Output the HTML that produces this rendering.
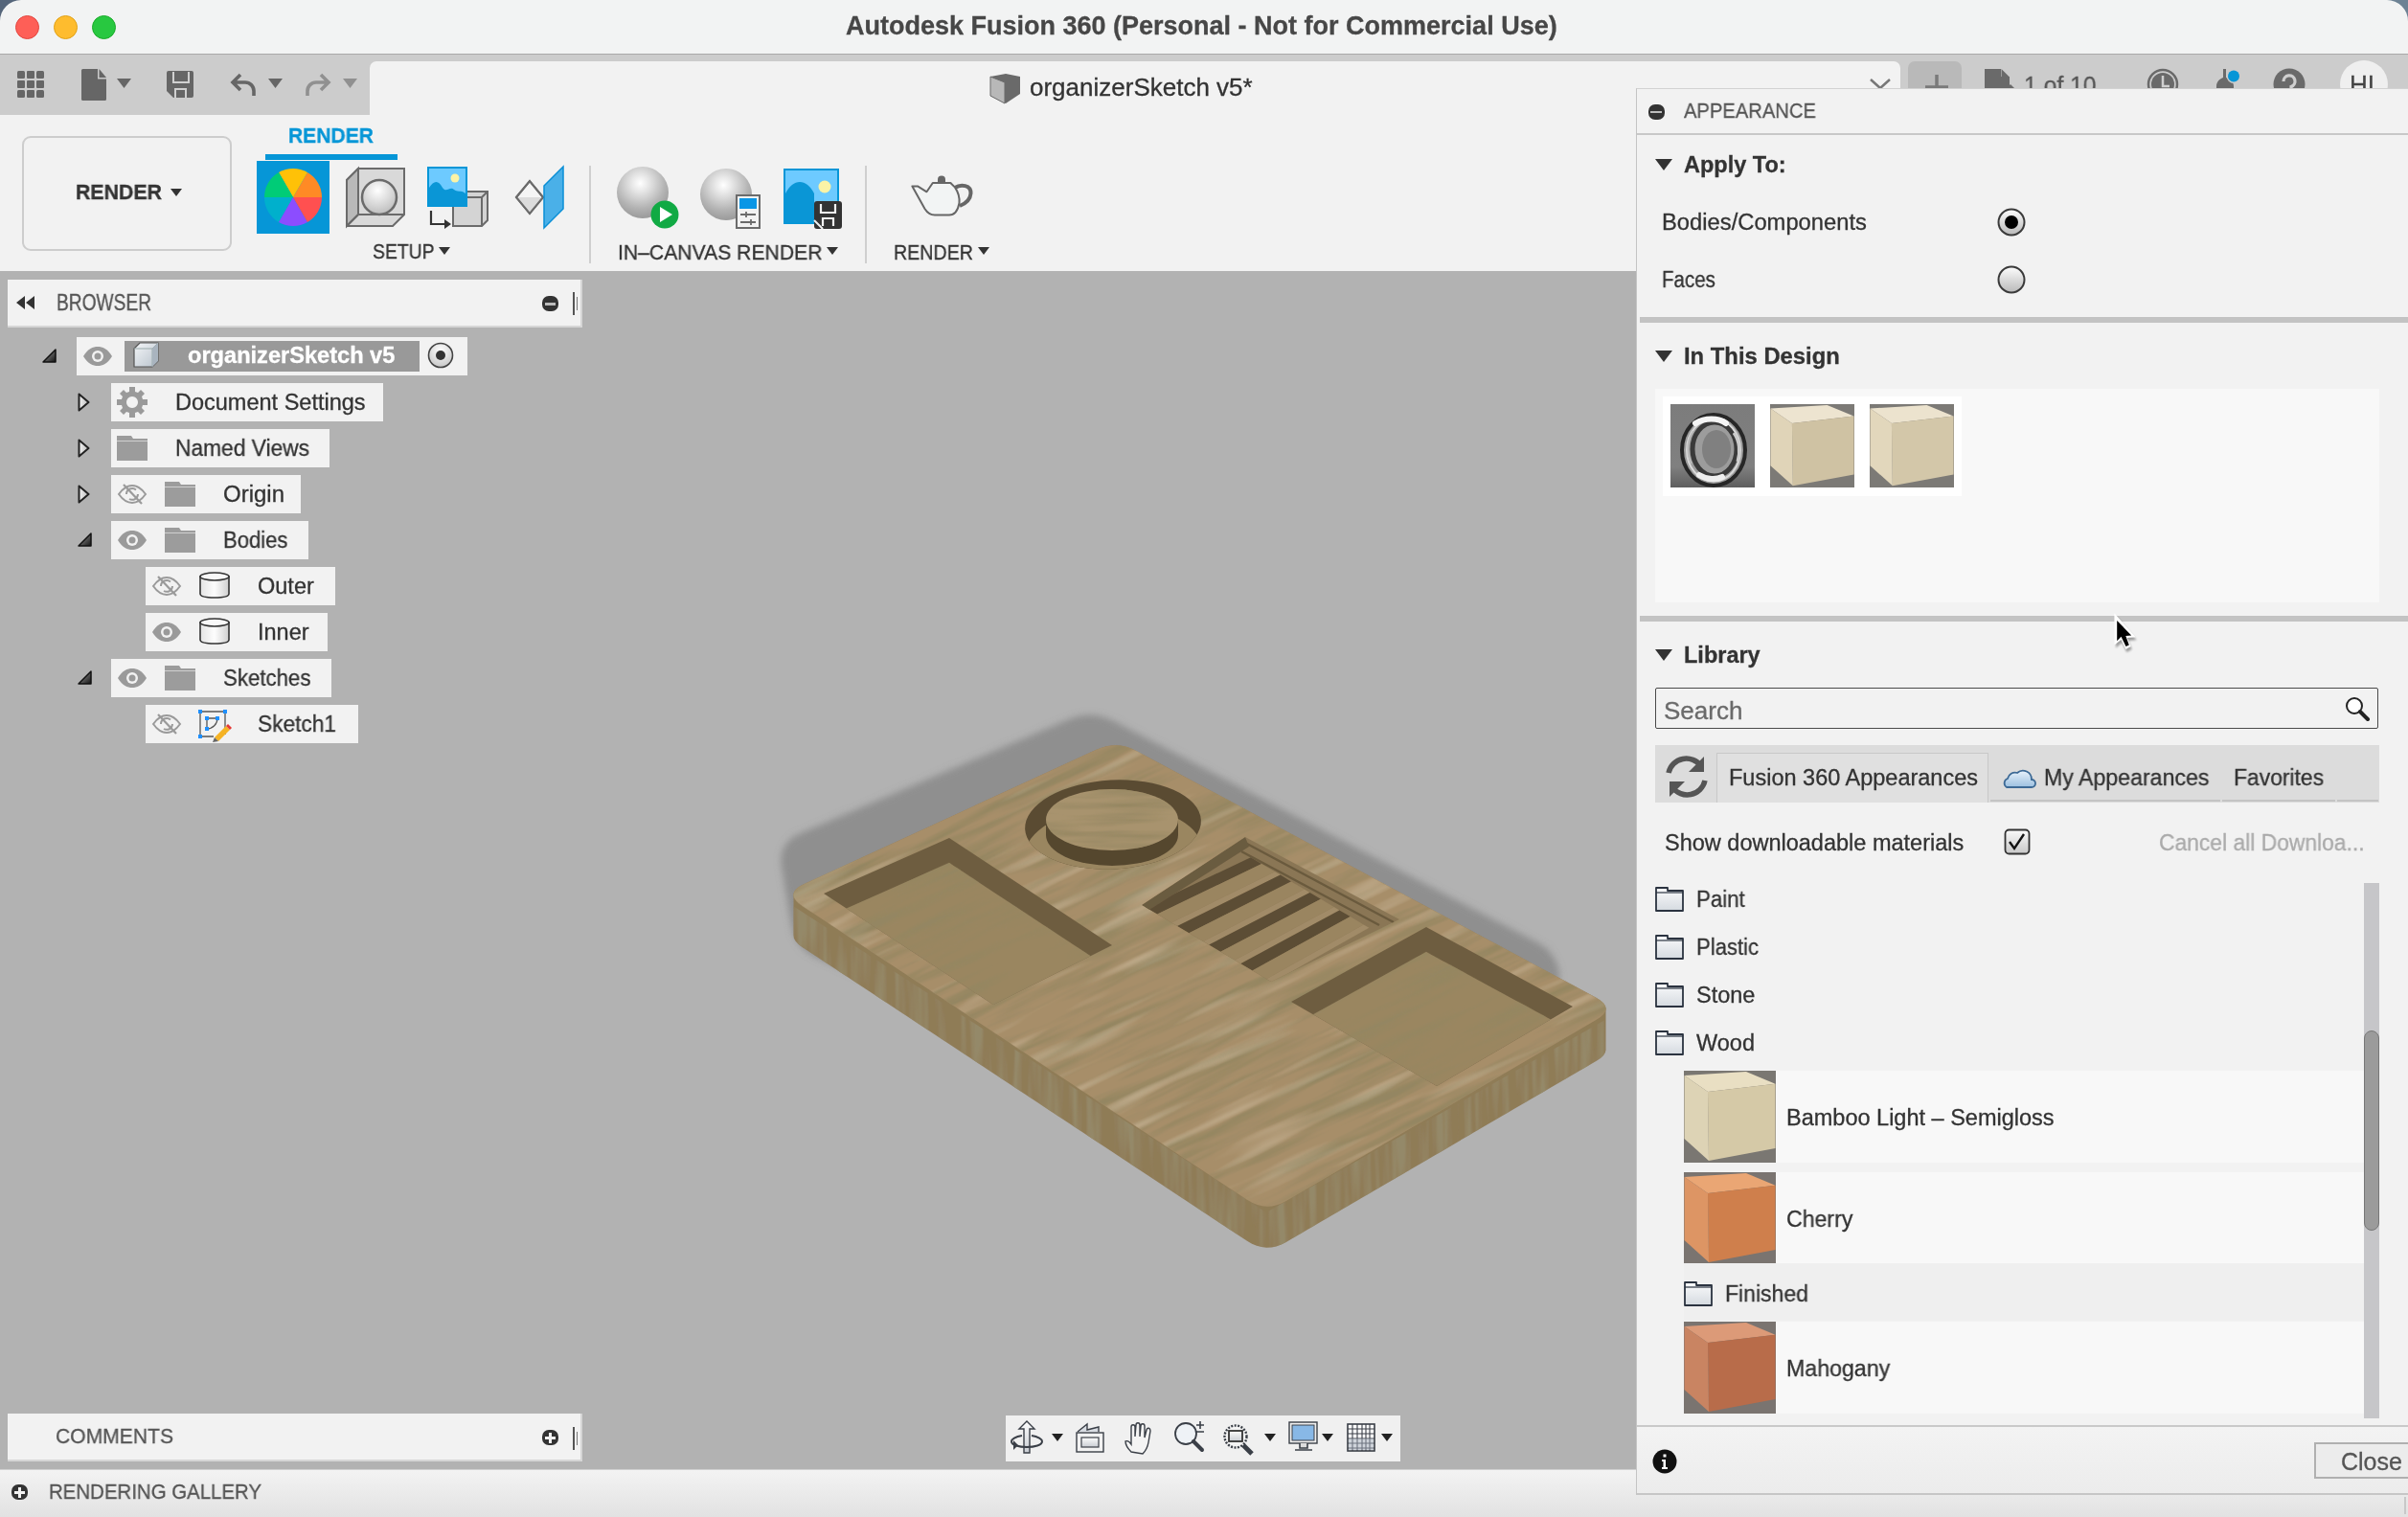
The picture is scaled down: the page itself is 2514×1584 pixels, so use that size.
<!DOCTYPE html>
<html><head><meta charset="utf-8">
<style>
*{margin:0;padding:0;box-sizing:border-box}
html,body{width:2514px;height:1584px;overflow:hidden;background:#f2f2f2;font-family:"Liberation Sans",sans-serif;color:#333}
.a{position:absolute}
.t{position:absolute;white-space:nowrap;line-height:1;will-change:transform;-webkit-text-stroke:0.3px currentColor}
svg{position:absolute;overflow:visible}
</style></head><body>
<!-- title bar -->
<div class="a" style="left:0;top:0;width:2514px;height:57px;background:#f2f3f3;border-bottom:1px solid #a9a9a9"></div>
<div class="a" style="left:16px;top:16px;width:25px;height:25px;border-radius:50%;background:#fe5f57;border:1px solid #e2463f"></div>
<div class="a" style="left:56px;top:16px;width:25px;height:25px;border-radius:50%;background:#febc2e;border:1px solid #e1a116"></div>
<div class="a" style="left:96px;top:16px;width:25px;height:25px;border-radius:50%;background:#28c840;border:1px solid #1aab29"></div>
<div class="t" style="left:883px;top:13.5px;font-size:27px;font-weight:bold;color:#474747">Autodesk Fusion 360 (Personal - Not for Commercial Use)</div>

<!-- quick access toolbar -->
<div class="a" style="left:0;top:57px;width:2514px;height:63px;background:#cccccc"></div>
<div class="a" style="left:386px;top:64px;width:1598px;height:56px;background:#f2f2f2;border-radius:7px 7px 0 0"></div>
<svg style="left:0;top:57px" width="400" height="63">
 <g fill="#666">
  <rect x="18" y="17" width="8" height="8" rx="1.5"/><rect x="28" y="17" width="8" height="8" rx="1"/><rect x="38" y="17" width="8" height="8" rx="1.5"/>
  <rect x="18" y="27" width="8" height="8" rx="1"/><rect x="28" y="27" width="8" height="8" rx="1"/><rect x="38" y="27" width="8" height="8" rx="1"/>
  <rect x="18" y="37" width="8" height="8" rx="1.5"/><rect x="28" y="37" width="8" height="8" rx="1"/><rect x="38" y="37" width="8" height="8" rx="1.5"/>
  <path d="M86.5 15h15.5v10.5h9v21a1.5 1.5 0 0 1-1.5 1.5h-23a1.5 1.5 0 0 1-1.5-1.5v-30a1.5 1.5 0 0 1 1.5-1.5z"/><path d="M103.5 15l7.5 9h-7.5z"/>
  <path d="M122 25h15l-7.5 10z"/>
  <path d="M176 17h24a2 2 0 0 1 2 2v24a2 2 0 0 1-2 2h-19l-7-7v-19a2 2 0 0 1 2-2z"/><path d="M181 18v11h16v-11" fill="none" stroke="#d0d0d0" stroke-width="2"/><path d="M183 45v-9h11v9" fill="none" stroke="#d0d0d0" stroke-width="2"/>
  <path d="M280 25h15l-7.5 10z"/>
 </g>
 <path d="M251 21l-8 8 8 8 M243 29h13a9 9 0 0 1 9 9v5" stroke="#666" stroke-width="3.6" fill="none"/>
 <path d="M335 21l8 8-8 8 M343 29h-13a9 9 0 0 0-9 9v5" stroke="#909090" stroke-width="3.6" fill="none"/>
 <path d="M358 25h15l-7.5 10z" fill="#909090"/>
</svg>
<!-- doc tab content -->
<svg style="left:1030px;top:74px" width="40" height="36">
 <path d="M4 6l16-3 15 3v18l-15 10-16-8z" fill="#6a6a6a"/>
 <path d="M4 6l15 6v22l-15-8z" fill="#b8b8b8" stroke="#6a6a6a" stroke-width="1"/>
</svg>
<div class="t" style="left:1075px;top:78px;font-size:26px;color:#333">organizerSketch v5*</div>
<svg style="left:1950px;top:80px" width="26" height="14"><path d="M3 3l10 9 10-9" stroke="#777" stroke-width="2.5" fill="none"/></svg>
<div class="a" style="left:1992px;top:64px;width:56px;height:40px;background:#b9b9b9;border-radius:7px"></div>
<svg style="left:2005px;top:78px" width="34" height="20"><path d="M17 0v20 M5 13h24" stroke="#7a7a7a" stroke-width="3.5"/></svg>
<svg style="left:2070px;top:70px" width="40" height="30"><path d="M2 2h17v28h-17z" fill="#6a6a6a"/><path d="M19.5 2l8 8h-8z" fill="#6a6a6a"/><path d="M19 10h9v10l-9 9z" fill="#6a6a6a"/><path d="M19 30l8-8 5 5-8 8z" fill="#cfcfcf"/><path d="M24 23l5-5 4 4-5 5z" fill="#6a6a6a"/></svg>
<div class="t" style="left:2113px;top:76px;font-size:26px;color:#555;transform:scaleX(0.95);transform-origin:0 0">1 of 10</div>
<svg style="left:2240px;top:70px" width="40" height="30"><circle cx="18" cy="18" r="15" stroke="#6a6a6a" stroke-width="2.5" fill="none"/><circle cx="18" cy="18" r="12" fill="#6a6a6a"/><path d="M18 9v11h7" stroke="#cfcfcf" stroke-width="2.5" fill="none"/></svg>
<svg style="left:2308px;top:70px" width="40" height="30"><path d="M6 30v-10c0-5 4-8 7-9v-9h3v9c4 1 8 4 8 9v10z" fill="#6a6a6a"/><circle cx="24" cy="9.5" r="7.5" fill="#cccccc"/><circle cx="24" cy="9.5" r="6" fill="#0696d7"/></svg>
<svg style="left:2370px;top:70px" width="40" height="30"><circle cx="20" cy="18" r="16.5" fill="#6a6a6a"/><path d="M14 15a6 6 0 1 1 8 5.5v4" stroke="#cfcfcf" stroke-width="3.2" fill="none"/></svg>
<div class="a" style="left:2443px;top:63px;width:50px;height:50px;background:#efefef;border-radius:50%"></div>
<div class="t" style="left:2453px;top:75px;font-size:26px;color:#444">HI</div>

<!-- ribbon -->
<div class="a" style="left:0;top:120px;width:1708px;height:163px;background:#f2f2f2"></div>
<div class="a" style="left:23px;top:142px;width:219px;height:120px;border:2px solid #cdcdcd;border-radius:9px"></div>
<div class="t" style="left:79.0px;top:190.1px;font-size:22.3px;color:#333;font-weight:bold;transform:scaleX(0.956);transform-origin:0 0">RENDER</div>
<svg style="left:178px;top:197px" width="14" height="10"><path d="M0 0h12l-6 8z" fill="#333"/></svg>
<div class="t" style="left:301.0px;top:131.1px;font-size:22.3px;color:#0696d7;font-weight:bold;transform:scaleX(0.945);transform-origin:0 0">RENDER</div>
<div class="a" style="left:277px;top:161px;width:138px;height:6px;background:#0696d7"></div>
<!-- color wheel -->
<div class="a" style="left:268px;top:168px;width:76px;height:76px;background:#0696d7"></div>
<svg style="left:268px;top:168px" width="76" height="76">
 <g transform="translate(38 38)">
  <path d="M0 0L30 0A30 30 0 0 0 15 -25.98z" fill="#ff8a25"/>
  <path d="M0 0L15 -25.98A30 30 0 0 0 -15 -25.98z" fill="#ffc107"/>
  <path d="M0 0L-15 -25.98A30 30 0 0 0 -30 0z" fill="#00cc77"/>
  <path d="M0 0L-30 0A30 30 0 0 0 -15 25.98z" fill="#00b0cc"/>
  <path d="M0 0L-15 25.98A30 30 0 0 0 15 25.98z" fill="#8c4dff"/>
  <path d="M0 0L15 25.98A30 30 0 0 0 30 0z" fill="#ff5050"/>
 </g>
</svg>
<!-- sphere box -->
<svg style="left:360px;top:174px" width="66" height="64">
 <defs><radialGradient id="sg" cx="0.45" cy="0.3" r="0.7"><stop offset="0" stop-color="#fff"/><stop offset="1" stop-color="#bdbdbd"/></radialGradient></defs>
 <path d="M2 14l12-12h48v48l-12 12h-48z" fill="#d9d9d9" stroke="#6b6b6b" stroke-width="2"/>
 <path d="M2 14l12-12v48l-12 12z" fill="#b9b9b9" stroke="#6b6b6b" stroke-width="2"/>
 <path d="M2 62l12-12h48" fill="none" stroke="#6b6b6b" stroke-width="2"/>
 <circle cx="36" cy="32" r="18" fill="url(#sg)" stroke="#6b6b6b" stroke-width="2.5"/>
</svg>
<!-- image to cube -->
<svg style="left:444px;top:172px" width="70" height="70">
 <path d="M29 34l6-6h30v30l-6 6h-30z" fill="#d4d4d4" stroke="#6b6b6b" stroke-width="2"/>
 <path d="M59 64v-30l6-6" fill="none" stroke="#6b6b6b" stroke-width="2"/>
 <path d="M29 34h30" stroke="#6b6b6b" stroke-width="2"/>
 <rect x="2" y="2" width="42" height="42" fill="#0696d7"/>
 <rect x="4" y="4" width="38" height="38" fill="#6dcaff"/>
 <path d="M4 42v-18c5-8 10-8 14 0 4 6 8 -2 12 2 3 3 7 0 12 4v12z" fill="#0a96d6"/>
 <circle cx="31" cy="14" r="4.5" fill="#fbf3a6"/>
 <path d="M6 48v14h16" stroke="#333" stroke-width="2.2" fill="none"/>
 <path d="M20 57l7 5-7 5z" fill="#333"/>
</svg>
<!-- diamond plane -->
<svg style="left:536px;top:172px" width="56" height="68">
 <path d="M3 34l14-17 14 17-14 17z" fill="#f5f5f5" stroke="#6b6b6b" stroke-width="2"/>
 <path d="M3 34h28l-14 17z" fill="#dcdcdc"/>
 <path d="M3 34l14-17 14 17-14 17z" fill="none" stroke="#6b6b6b" stroke-width="2"/>
 <path d="M32 22l20-20v44l-20 20z" fill="#4ab0e8" stroke="#0a8fd6" stroke-width="1.5"/>
</svg>
<div class="t" style="left:389.0px;top:252.3px;font-size:21.6px;color:#333;transform:scaleX(0.897);transform-origin:0 0">SETUP</div>
<svg style="left:458px;top:258px" width="14" height="10"><path d="M0 0h12l-6 8z" fill="#333"/></svg>
<div class="a" style="left:615px;top:173px;width:2px;height:102px;background:#cfcfcf"></div>
<!-- in-canvas render -->
<svg style="left:638px;top:170px" width="250" height="72">
 <defs>
  <radialGradient id="ball" cx="0.45" cy="0.32" r="0.68"><stop offset="0" stop-color="#ffffff"/><stop offset="0.25" stop-color="#e6e6e6"/><stop offset="0.7" stop-color="#b4b4b4"/><stop offset="1" stop-color="#9a9a9a"/></radialGradient>
 </defs>
 <circle cx="33" cy="31" r="27" fill="url(#ball)"/>
 <circle cx="56" cy="54" r="14.5" fill="#11aa44"/>
 <path d="M51 46v16l13-8z" fill="#fff"/>
 <circle cx="120" cy="33" r="27" fill="url(#ball)"/>
 <rect x="131" y="34" width="24" height="34" fill="#f2f2f2" stroke="#6b6b6b" stroke-width="2"/>
 <rect x="134" y="37" width="18" height="11" fill="#0a96e6"/>
 <path d="M135 54h16 M135 62h16 M141 51v6 M146 59v6" stroke="#6b6b6b" stroke-width="1.8"/>
 <rect x="180" y="6" width="58" height="58" fill="#0696d7"/>
 <rect x="182" y="8" width="54" height="54" fill="#6dcaff"/>
 <path d="M182 62v-30c8-16 22-16 30 0v30z" fill="#0a96d6"/>
 <circle cx="223" cy="25" r="6.5" fill="#fbf3a6"/>
 <rect x="212" y="40" width="29" height="29" rx="3" fill="#333"/>
 <path d="M212 60l9 9" stroke="#f2f2f2" stroke-width="2"/>
 <path d="M219 43v9h15v-9 M221 66v-8h11v8" stroke="#f2f2f2" stroke-width="2.2" fill="none"/>
</svg>
<div class="t" style="left:645.0px;top:252.7px;font-size:21.6px;color:#333;transform:scaleX(0.979);transform-origin:0 0">IN&#8211;CANVAS RENDER</div>
<svg style="left:863px;top:258px" width="14" height="10"><path d="M0 0h12l-6 8z" fill="#333"/></svg>
<div class="a" style="left:903px;top:173px;width:2px;height:102px;background:#cfcfcf"></div>
<svg style="left:948px;top:182px" width="72" height="48">
 <path d="M49 14C55 10 66 11 65.5 20C65 27 59 31 54 33" fill="none" stroke="#666" stroke-width="4"/>
 <path d="M4.4 12.4H10L19.5 18.3L25.8 9H44.4L49 13.6C52 18 54 24 53.5 30C52 38 48 42.5 43 42.5H28C24 42.5 20 40 17.5 36Z" fill="#f2f4f4" stroke="#666" stroke-width="2" stroke-linejoin="round"/>
 <path d="M31 9V5.5A4 4 0 0 1 39 5.5V9Z" fill="#666"/>
</svg>
<div class="t" style="left:933.0px;top:252.7px;font-size:21.6px;color:#333;transform:scaleX(0.910);transform-origin:0 0">RENDER</div>
<svg style="left:1021px;top:258px" width="14" height="10"><path d="M0 0h12l-6 8z" fill="#333"/></svg>

<!-- viewport -->
<div class="a" style="left:0;top:283px;width:1708px;height:1251px;background:#b2b2b2"></div>
<!-- TRAY -->
<svg style="left:0;top:0" width="1708" height="1534">
<defs>
<filter id="soft" x="-2%" y="-2%" width="104%" height="104%"><feGaussianBlur stdDeviation="0.7"/></filter>
<filter id="blur3" x="-10%" y="-10%" width="120%" height="120%"><feGaussianBlur stdDeviation="3.5"/></filter>
<filter id="grainTop" x="-5%" y="-5%" width="110%" height="110%"><feTurbulence type="fractalNoise" baseFrequency="0.007 0.085" numOctaves="3" seed="4"/><feColorMatrix type="matrix" values="0 0 0 0 0.30  0 0 0 0 0.24  0 0 0 0 0.12  3.0 0 0 0 -1.25"/><feComposite in2="SourceGraphic" operator="in"/></filter>
<filter id="grainHi" x="-5%" y="-5%" width="110%" height="110%"><feTurbulence type="fractalNoise" baseFrequency="0.006 0.07" numOctaves="2" seed="11"/><feColorMatrix type="matrix" values="0 0 0 0 0.76  0 0 0 0 0.66  0 0 0 0 0.50  1.4 0 0 0 -0.78"/><feComposite in2="SourceGraphic" operator="in"/></filter>
<filter id="grainSide" x="-5%" y="-5%" width="110%" height="110%"><feTurbulence type="fractalNoise" baseFrequency="0.12 0.008" numOctaves="2" seed="7"/><feColorMatrix type="matrix" values="0 0 0 0 0.30  0 0 0 0 0.25  0 0 0 0 0.14  3.2 0 0 0 -1.3"/><feComposite in2="SourceGraphic" operator="in"/></filter>
</defs>
<defs><clipPath id="pk0"><polygon points="860.0,933.0 991.0,875.0 1161.0,987.0 1037.0,1049.0"/></clipPath><clipPath id="pk1"><polygon points="1348.0,1046.0 1489.0,968.0 1642.0,1051.0 1500.0,1134.0"/></clipPath><clipPath id="pks"><polygon points="1192.0,945.0 1300.0,874.0 1461.0,960.0 1327.0,1025.0"/></clipPath><clipPath id="pkc"><ellipse cx="1162" cy="861" rx="92" ry="46.5" transform="rotate(-3 1162 861)"/></clipPath></defs>
<path d="M816.2,905.7 Q812.0,880.0 835.9,869.9 L1116.1,751.1 Q1140.0,741.0 1163.0,753.0 L1605.0,984.1 Q1622.0,993.0 1627.0,1011.5 L1627.0,1011.5 Q1632.0,1030.0 1614.9,1038.7 L1323.1,1188.1 Q1300.0,1200.0 1276.3,1189.4 L853.7,1000.6 Q830.0,990.0 825.8,964.3 Z" fill="#8f8f8f" filter="url(#blur3)"/>
<g filter="url(#soft)">
<polygon points="828.5,933.8 829.3,930.9 831.5,928.2 835.0,925.5 839.8,923.0 1144.2,783.0 1149.6,780.9 1155.1,779.3 1160.5,778.5 1165.8,778.3 1171.2,778.8 1176.5,780.0 1181.8,781.9 1187.1,784.4 1665.9,1041.6 1670.5,1044.5 1673.8,1047.4 1675.8,1050.3 1676.5,1053.2 1676.5,1096.2 1675.9,1099.1 1674.0,1102.1 1670.8,1105.1 1666.3,1108.1 1342.7,1296.9 1337.6,1299.5 1332.4,1301.4 1327.3,1302.4 1322.2,1302.7 1317.1,1302.1 1312.0,1300.8 1307.0,1298.7 1302.0,1295.8 838.0,989.2 833.7,986.0 830.6,982.8 828.9,979.8 828.5,976.8" fill="#8f7b57"/>
<clipPath id="sideclip"><polygon points="828.5,933.8 829.3,930.9 831.5,928.2 835.0,925.5 839.8,923.0 1144.2,783.0 1149.6,780.9 1155.1,779.3 1160.5,778.5 1165.8,778.3 1171.2,778.8 1176.5,780.0 1181.8,781.9 1187.1,784.4 1665.9,1041.6 1670.5,1044.5 1673.8,1047.4 1675.8,1050.3 1676.5,1053.2 1676.5,1096.2 1675.9,1099.1 1674.0,1102.1 1670.8,1105.1 1666.3,1108.1 1342.7,1296.9 1337.6,1299.5 1332.4,1301.4 1327.3,1302.4 1322.2,1302.7 1317.1,1302.1 1312.0,1300.8 1307.0,1298.7 1302.0,1295.8 838.0,989.2 833.7,986.0 830.6,982.8 828.9,979.8 828.5,976.8"/></clipPath>
<g clip-path="url(#sideclip)"><path d="M808.0,933.0 1322.0,1266.0 1697.0,1053.0 1697.0,1103.0 1322.0,1316.0 808.0,983.0Z" fill="#000" filter="url(#grainSide)"/></g>
<path d="M838.0,946.2 Q818.0,933.0 839.8,923.0 L1144.2,783.0 Q1166.0,773.0 1187.1,784.4 L1665.9,1041.6 Q1687.0,1053.0 1666.3,1065.1 L1342.7,1253.9 Q1322.0,1266.0 1302.0,1252.8 Z" fill="#a78e69"/>
<g transform="rotate(-25 1250 1020)"><path d="M907.8,779.0 Q895.2,758.6 919.2,758.7 L1254.3,760.5 Q1278.3,760.6 1292.6,779.9 L1617.8,1215.4 Q1632.1,1234.6 1608.2,1236.8 L1235.2,1271.2 Q1211.3,1273.4 1198.7,1252.9 Z" fill="#000" filter="url(#grainTop)"/><path d="M907.8,779.0 Q895.2,758.6 919.2,758.7 L1254.3,760.5 Q1278.3,760.6 1292.6,779.9 L1617.8,1215.4 Q1632.1,1234.6 1608.2,1236.8 L1235.2,1271.2 Q1211.3,1273.4 1198.7,1252.9 Z" fill="#000" filter="url(#grainHi)"/></g>
<polygon points="860.0,933.0 991.0,875.0 1161.0,987.0 1037.0,1049.0" fill="#6e5d40"/>
<polygon points="860.0,959.0 991.0,901.0 1161.0,1013.0 1037.0,1075.0" fill="#9a8661" clip-path="url(#pk0)"/>
<g clip-path="url(#pk0)"><g transform="rotate(-25 1250 1020)"><path d="M922.3,799.9 1065.6,802.7 1172.3,976.0 1033.7,979.8Z" fill="#000" filter="url(#grainTop)"/></g></g>
<polygon points="1348.0,1046.0 1489.0,968.0 1642.0,1051.0 1500.0,1134.0" fill="#6e5d40"/>
<polygon points="1348.0,1072.0 1489.0,994.0 1642.0,1077.0 1500.0,1160.0" fill="#9a8661" clip-path="url(#pk1)"/>
<g clip-path="url(#pk1)"><g transform="rotate(-25 1250 1020)"><path d="M1316.8,1108.5 1477.6,1097.4 1581.2,1237.3 1417.4,1252.5Z" fill="#000" filter="url(#grainTop)"/></g></g>
<polygon points="1192.0,945.0 1300.0,874.0 1461.0,960.0 1327.0,1025.0" fill="#8a7655"/>
<g clip-path="url(#pks)">
<polygon points="1196.0,947.4 1305.8,895.2 1317.1,902.0 1208.2,954.6" fill="#5c4d35"/>
<polygon points="1208.2,954.6 1317.1,902.0 1331.0,910.2 1223.0,963.4" fill="#9a8560"/>
<polygon points="1223.0,963.4 1331.0,910.2 1336.7,913.6 1229.1,967.0" fill="#a18b67"/>
<polygon points="1229.1,967.0 1336.7,913.6 1348.0,920.4 1241.3,974.2" fill="#5c4d35"/>
<polygon points="1241.3,974.2 1348.0,920.4 1361.8,928.6 1256.1,983.0" fill="#9a8560"/>
<polygon points="1256.1,983.0 1361.8,928.6 1367.5,932.0 1262.2,986.6" fill="#a18b67"/>
<polygon points="1262.2,986.6 1367.5,932.0 1378.9,938.8 1274.3,993.8" fill="#5c4d35"/>
<polygon points="1274.3,993.8 1378.9,938.8 1392.7,947.0 1289.2,1002.6" fill="#9a8560"/>
<polygon points="1289.2,1002.6 1392.7,947.0 1398.4,950.4 1295.3,1006.2" fill="#a18b67"/>
<polygon points="1295.3,1006.2 1398.4,950.4 1409.7,957.1 1307.4,1013.4" fill="#5c4d35"/>
<polygon points="1307.4,1013.4 1409.7,957.1 1423.6,965.4 1322.3,1022.2" fill="#9a8560"/>
<polygon points="1322.3,1022.2 1423.6,965.4 1429.3,968.8 1328.3,1025.8" fill="#a18b67"/>
<path d="M1300,880 L1455,963 M1296,889 L1440,966" stroke="#6a5a3e" stroke-width="2.5" fill="none"/>
<polygon points="1192.0,945.0 1300.0,874.0 1304.0,884.0 1200.0,950.0" fill="#6b5b40"/>
</g>
<ellipse cx="1162" cy="861" rx="92" ry="46.5" transform="rotate(-3 1162 861)" fill="#5a4b33"/>
<g clip-path="url(#pkc)"><ellipse cx="1162" cy="889" rx="92" ry="46.5" transform="rotate(-3 1162 889)" fill="#9a8660"/></g>
<path d="M1092,856 L1092,872 A69,32 0 0 0 1230,872 L1230,856 Z" fill="#55472f"/>
<ellipse cx="1161" cy="856" rx="69" ry="32" fill="#a8936e"/>
<g clip-path="url(#pkc)"><g transform="rotate(-25 1250 1020)"><ellipse cx="1238.6" cy="833.8" rx="69" ry="32" transform="rotate(25 1238.6 833.8)" fill="#000" filter="url(#grainTop)"/></g></g>
</g>
</svg>
<!-- /TRAY -->
<svg width="0" height="0" style="position:absolute">
 <defs>
  <symbol id="eye" viewBox="0 0 32 20"><path d="M1 10C6 2 11 0 16 0s10 2 15 10c-5 8-10 10-15 10S6 18 1 10z" fill="#9a9a9a"/><circle cx="16" cy="10" r="6" fill="#f2f2f2"/><circle cx="16" cy="10" r="3.5" fill="#9a9a9a"/></symbol>
  <symbol id="eyeoff" viewBox="0 0 32 22"><path d="M2 11C7 4 11 2 16 2s9 2 14 9c-5 7-9 9-14 9S7 18 2 11z" fill="none" stroke="#9a9a9a" stroke-width="2"/><path d="M10 11a6 6 0 0 1 10-4.5 M22 11a6 6 0 0 1-9 5" fill="none" stroke="#9a9a9a" stroke-width="2"/><path d="M7 1l19 20" stroke="#9a9a9a" stroke-width="2.2"/></symbol>
  <symbol id="fold" viewBox="0 0 32 26"><path d="M0 0h15l2 3h15v23h-32z" fill="#9c9c9c"/><path d="M0 5.5h32" stroke="#cfcfcf" stroke-width="1"/></symbol>
  <symbol id="tri" viewBox="0 0 15 15"><linearGradient id="tg" x1="0" y1="0" x2="1" y2="1"><stop offset="0" stop-color="#aaa"/><stop offset="1" stop-color="#111"/></linearGradient><path d="M14 1v13h-13z" fill="url(#tg)" stroke="#111" stroke-width="1.5" stroke-linejoin="round"/></symbol>
  <symbol id="trio" viewBox="0 0 13 20"><linearGradient id="tog" x1="0" y1="0" x2="1" y2="0"><stop offset="0" stop-color="#f4f4f4"/><stop offset="1" stop-color="#bbb"/></linearGradient><path d="M1.5 1.5l10 8.5-10 8.5z" fill="url(#tog)" stroke="#222" stroke-width="2" stroke-linejoin="round"/></symbol>
  <symbol id="cyl" viewBox="0 0 32 28"><linearGradient id="cg" x1="0" y1="0" x2="1" y2="0"><stop offset="0" stop-color="#e4e4e4"/><stop offset="0.5" stop-color="#fdfdfd"/><stop offset="1" stop-color="#cfcfcf"/></linearGradient><path d="M1 5v18c0 3 7 4 15 4s15-1 15-4v-18z" fill="url(#cg)" stroke="#333" stroke-width="1.6"/><ellipse cx="16" cy="5" rx="15" ry="4" fill="#f8f8f8" stroke="#333" stroke-width="1.6"/></symbol>
  <symbol id="gear" viewBox="0 0 32 32"><path fill="#9a9a9a" fill-rule="evenodd" d="M13 0h6v5l3 1 3-3 4 4-3 3 1 3h5v6h-5l-1 3 3 3-4 4-3-3-3 1v5h-6v-5l-3-1-3 3-4-4 3-3-1-3h-5v-6h5l1-3-3-3 4-4 3 3 3-1z M16 10a6 6 0 1 0 0.01 0z"/></symbol>
 </defs>
</svg>
<!-- browser -->
<div class="a" style="left:8px;top:292px;width:600px;height:50px;background:#f2f2f2;border-right:2px solid #d6d6d6;border-bottom:2px solid #d6d6d6"></div>
<svg style="left:16px;top:308px" width="24" height="16"><path d="M1 8l9-7v14z M11 8l9-7v14z" fill="#333"/></svg>
<div class="t" style="left:58.7px;top:304.8px;font-size:23.0px;color:#555;transform:scaleX(0.833);transform-origin:0 0">BROWSER</div>
<div class="a" style="left:566px;top:309px;width:17px;height:16px;border-radius:7px;background:#333"></div>
<div class="a" style="left:569px;top:316px;width:11px;height:2.5px;background:#bdbdbd"></div>
<div class="a" style="left:598px;top:305px;width:2px;height:24px;background:#555"></div>
<div class="a" style="left:602px;top:310px;width:1px;height:14px;background:#777"></div>

<svg style="left:44px;top:364px" width="16" height="16"><use href="#tri" width="15" height="15"/></svg>
<div class="a" style="left:80px;top:352px;width:408px;height:40px;background:#f2f2f2"></div>
<svg style="left:86px;top:362px" width="32" height="20"><use href="#eye" width="32" height="20"/></svg>
<div class="a" style="left:130px;top:356px;width:308px;height:32px;background:#999"></div>
<svg style="left:138px;top:356px" width="30" height="28">
 <linearGradient id="cubeg" x1="0" y1="0" x2="1" y2="1"><stop offset="0" stop-color="#f4f6f8"/><stop offset="1" stop-color="#b8c2cc"/></linearGradient>
 <path d="M2 8l6-6h19v19l-6 6h-19z" fill="url(#cubeg)" stroke="#555" stroke-width="1.2"/>
 <path d="M2 8h19v19 M21 8l6-6" fill="none" stroke="#9aa" stroke-width="1"/>
 <path d="M21 8l6-6v19l-6 6z" fill="#a9b4bf"/>
</svg>
<div class="t" style="left:196.0px;top:360.0px;font-size:23.6px;color:#fff;font-weight:bold">organizerSketch v5</div>
<svg style="left:446px;top:357px" width="28" height="28">
 <radialGradient id="rg1" cx="0.5" cy="0.3" r="0.7"><stop offset="0" stop-color="#fff"/><stop offset="1" stop-color="#c8c8c8"/></radialGradient>
 <circle cx="14" cy="14" r="12.5" fill="url(#rg1)" stroke="#444" stroke-width="1.6"/>
 <circle cx="14" cy="14" r="5" fill="#333"/>
</svg>

<svg style="left:81px;top:410px" width="14" height="20"><use href="#trio" width="13" height="20"/></svg>
<div class="a" style="left:116px;top:400px;width:284px;height:40px;background:#f2f2f2"></div>
<svg style="left:122px;top:404px" width="32" height="32"><use href="#gear" width="32" height="32"/></svg>
<div class="t" style="left:183.0px;top:408.7px;font-size:23.5px;color:#333">Document Settings</div>

<svg style="left:81px;top:458px" width="14" height="20"><use href="#trio" width="13" height="20"/></svg>
<div class="a" style="left:116px;top:448px;width:228px;height:40px;background:#f2f2f2"></div>
<svg style="left:122px;top:455px" width="32" height="26"><use href="#fold" width="32" height="26"/></svg>
<div class="t" style="left:183.0px;top:456.7px;font-size:23.5px;color:#333;transform:scaleX(0.969);transform-origin:0 0">Named Views</div>

<svg style="left:81px;top:506px" width="14" height="20"><use href="#trio" width="13" height="20"/></svg>
<div class="a" style="left:116px;top:496px;width:198px;height:40px;background:#f2f2f2"></div>
<svg style="left:122px;top:505px" width="32" height="22"><use href="#eyeoff" width="32" height="22"/></svg>
<svg style="left:172px;top:503px" width="32" height="26"><use href="#fold" width="32" height="26"/></svg>
<div class="t" style="left:232.5px;top:504.7px;font-size:23.5px;color:#333;transform:scaleX(1.021);transform-origin:0 0">Origin</div>

<svg style="left:81px;top:556px" width="16" height="16"><use href="#tri" width="15" height="15"/></svg>
<div class="a" style="left:116px;top:544px;width:206px;height:40px;background:#f2f2f2"></div>
<svg style="left:122px;top:554px" width="32" height="20"><use href="#eye" width="32" height="20"/></svg>
<svg style="left:172px;top:551px" width="32" height="26"><use href="#fold" width="32" height="26"/></svg>
<div class="t" style="left:233.0px;top:552.7px;font-size:23.5px;color:#333;transform:scaleX(0.939);transform-origin:0 0">Bodies</div>

<div class="a" style="left:152px;top:592px;width:198px;height:40px;background:#f2f2f2"></div>
<svg style="left:158px;top:601px" width="32" height="22"><use href="#eyeoff" width="32" height="22"/></svg>
<svg style="left:208px;top:597px" width="32" height="28"><use href="#cyl" width="32" height="28"/></svg>
<div class="t" style="left:268.5px;top:600.7px;font-size:23.5px;color:#333">Outer</div>

<div class="a" style="left:152px;top:640px;width:190px;height:40px;background:#f2f2f2"></div>
<svg style="left:158px;top:650px" width="32" height="20"><use href="#eye" width="32" height="20"/></svg>
<svg style="left:208px;top:645px" width="32" height="28"><use href="#cyl" width="32" height="28"/></svg>
<div class="t" style="left:268.5px;top:648.7px;font-size:23.5px;color:#333">Inner</div>

<svg style="left:81px;top:700px" width="16" height="16"><use href="#tri" width="15" height="15"/></svg>
<div class="a" style="left:116px;top:688px;width:230px;height:40px;background:#f2f2f2"></div>
<svg style="left:122px;top:698px" width="32" height="20"><use href="#eye" width="32" height="20"/></svg>
<svg style="left:172px;top:695px" width="32" height="26"><use href="#fold" width="32" height="26"/></svg>
<div class="t" style="left:232.6px;top:696.7px;font-size:23.5px;color:#333;transform:scaleX(0.946);transform-origin:0 0">Sketches</div>

<div class="a" style="left:152px;top:736px;width:222px;height:40px;background:#f2f2f2"></div>
<svg style="left:158px;top:745px" width="32" height="22"><use href="#eyeoff" width="32" height="22"/></svg>
<svg style="left:207px;top:740px" width="34" height="34">
 <path d="M2 3h26v24 M2 3v26h14" fill="none" stroke="#555" stroke-width="1.3"/>
 <path d="M9 21V10h11c0 6-5 11-11 11" fill="none" stroke="#555" stroke-width="1.3"/>
 <g fill="#1e90ff"><rect x="0" y="1" width="4" height="4"/><rect x="26" y="1" width="4" height="4"/><rect x="0" y="27" width="4" height="4"/><rect x="7" y="8" width="4" height="4"/><rect x="18" y="8" width="4" height="4"/><rect x="7" y="19" width="4" height="4"/></g>
 <path d="M17 30l12-12 4 4-12 12z" fill="#f5b324"/><path d="M29 18l2-2 4 4-2 2z" fill="#e53935"/><path d="M17 30l-2 5 6-1z" fill="#666"/>
</svg>
<div class="t" style="left:268.5px;top:744.7px;font-size:23.5px;color:#333;transform:scaleX(0.966);transform-origin:0 0">Sketch1</div>

<!-- comments -->
<div class="a" style="left:8px;top:1476px;width:600px;height:50px;background:#f2f2f2;border-right:2px solid #d6d6d6;border-bottom:2px solid #d6d6d6"></div>
<div class="t" style="left:58.0px;top:1488.8px;font-size:22.3px;color:#555;transform:scaleX(0.946);transform-origin:0 0">COMMENTS</div>
<div class="a" style="left:566px;top:1493px;width:17px;height:16px;border-radius:7px;background:#333"></div>
<div class="a" style="left:569px;top:1500px;width:11px;height:2.5px;background:#f2f2f2"></div>
<div class="a" style="left:573.3px;top:1495.5px;width:2.5px;height:11px;background:#f2f2f2"></div>
<div class="a" style="left:598px;top:1490px;width:2px;height:24px;background:#555"></div>
<div class="a" style="left:602px;top:1495px;width:1px;height:14px;background:#777"></div>

<!-- nav bar -->
<div class="a" style="left:1050px;top:1478px;width:412px;height:48px;background:#f0f0f0"></div>
<svg style="left:1050px;top:1478px" width="412" height="48">
 <defs>
  <linearGradient id="nvg" x1="0" y1="0" x2="0" y2="1"><stop offset="0" stop-color="#fdfdfd"/><stop offset="1" stop-color="#c9cdd3"/></linearGradient>
 </defs>
 <g stroke="#3a3f47" stroke-width="1.4">
  <path d="M19 30V14h-5l8-8 8 8h-5v25h-6z" fill="url(#nvg)"/>
  <path d="M17 21c-7 1-11 4-11 6 0 4 8 6 16 6s16-2 16-6c0-2-4-5-11-6" fill="none" stroke-width="2"/>
 </g>
 <path d="M8 26l5 5-5 5z" fill="#3a3f47"/>
 <path d="M48 19h12l-6 8z" fill="#222"/>
 <g stroke="#3a3f47" stroke-width="1.4">
  <rect x="74" y="18" width="28" height="20" fill="#f2f2f2"/>
  <rect x="79" y="23" width="18" height="10" fill="url(#nvg)" stroke-width="1.2"/>
  <path d="M75 17l10-8v6l12-3v5" fill="#d8dce2"/>
 </g>
 <path d="M131 38c-4-4-6-7-6-11 2-1 4 0 6 3l0-18c0-3 4-3 4 0v10l1-12c0-3 4-3 4 0v12l1-11c0-3 4-3 4 0v12l2-8c1-3 4-2 4 1l-2 12c-1 6-3 9-6 12z" fill="#f4f4f4" stroke="#3a3f47" stroke-width="1.4"/>
 <circle cx="188" cy="19" r="11" fill="#eef2f6" stroke="#3a3f47" stroke-width="1.8"/>
 <path d="M196 27l9 9" stroke="#3a3f47" stroke-width="4" stroke-linecap="round"/>
 <path d="M203 6v8 M199 10h8 M199 17h8" stroke="#3a3f47" stroke-width="1.6"/>
 <circle cx="240" cy="22" r="11.5" fill="#f4f4f4" stroke="#3a3f47" stroke-width="2.4" stroke-dasharray="2 1.5"/>
 <rect x="233" y="16" width="14" height="11" fill="url(#nvg)" stroke="#333" stroke-width="1.8"/>
 <path d="M248 31l9 9" stroke="#3a3f47" stroke-width="5"/>
 <path d="M270 19h12l-6 8z" fill="#222"/>
 <rect x="296" y="7" width="29" height="22" fill="#f0f0f0" stroke="#3a3f47" stroke-width="1.4"/>
 <rect x="299" y="10" width="23" height="16" fill="#88b8e6" stroke="#3a3f47" stroke-width="1"/>
 <path d="M307 29v5h8v-5 M302 36h18" stroke="#3a3f47" stroke-width="1.6" fill="#ddd"/>
 <path d="M330 19h12l-6 8z" fill="#222"/>
 <rect x="357" y="9" width="28" height="28" fill="#fff" stroke="#3a3f47" stroke-width="1.6"/>
 <g stroke="#3a3f47" stroke-width="1.1"><path d="M357 14h28M357 19h28M357 24h28M357 29h28M357 34h28M362 9v28M367 9v28M372 9v28M376 9v28M380 9v28"/></g>
 <rect x="358" y="24" width="26" height="12" fill="#9fa9b8" opacity="0.5"/>
 <path d="M392 19h12l-6 8z" fill="#222"/>
</svg>
<!-- bottom bar -->
<div class="a" style="left:0;top:1534px;width:2514px;height:50px;background:linear-gradient(#f3f3f3,#e2e2e2);border-top:1px solid #d0d0d0"></div>
<div class="a" style="left:12px;top:1550px;width:17px;height:16px;border-radius:7px;background:#333"></div>
<div class="a" style="left:15px;top:1557px;width:11px;height:2.5px;background:#f2f2f2"></div>
<div class="a" style="left:19.3px;top:1552.5px;width:2.5px;height:11px;background:#f2f2f2"></div>
<div class="t" style="left:51.0px;top:1547.1px;font-size:22.3px;color:#555;transform:scaleX(0.916);transform-origin:0 0">RENDERING GALLERY</div>

<!-- appearance panel -->
<div class="a" style="left:1708px;top:92px;width:806px;height:1469px;background:#f2f2f2;border-left:1.5px solid #c4c4c4;border-top:1px solid #d2d2d2;border-bottom:2px solid #c6c6c6"></div>
<svg width="0" height="0" style="position:absolute">
 <defs>
  <symbol id="dtri" viewBox="0 0 18 12"><path d="M0 0h18l-9 12z" fill="#333"/></symbol>
  <symbol id="lfold" viewBox="0 0 30 26"><linearGradient id="lfg" x1="0" y1="0" x2="0" y2="1"><stop offset="0" stop-color="#fafbfc"/><stop offset="1" stop-color="#d5dae0"/></linearGradient><path d="M1 1h12v3h16v21h-28z" fill="url(#lfg)" stroke="#2b3340" stroke-width="1.8" stroke-linejoin="round"/><path d="M1 6h28" stroke="#2b3340" stroke-width="1.2"/></symbol>
  <symbol id="cube" viewBox="0 0 96 96"><rect width="96" height="96" fill="var(--bg)"/><path d="M0.5 5L65 1 95.5 13.7 25 22z" fill="var(--top)"/><path d="M25 22L95.5 13.7 95.5 81 26 94z" fill="var(--front)"/><path d="M0.5 5L25 22 26 94 0.5 71z" fill="var(--left)"/></symbol>
 </defs>
</svg>
<!-- header -->
<div class="a" style="left:1709px;top:139px;width:805px;height:2px;background:#c8c8c8"></div>
<div class="a" style="left:1720.5px;top:108.5px;width:17px;height:16px;border-radius:7px;background:#333"></div>
<div class="a" style="left:1723px;top:115.5px;width:11.5px;height:2.5px;background:#bdbdbd"></div>
<div class="t" style="left:1758.0px;top:105.1px;font-size:22.3px;color:#555;transform:scaleX(0.905);transform-origin:0 0">APPEARANCE</div>
<!-- apply to -->
<svg style="left:1728px;top:166px" width="18" height="12"><use href="#dtri" width="18" height="12"/></svg>
<div class="t" style="left:1758.0px;top:160.5px;font-size:23.5px;color:#333;font-weight:bold">Apply To:</div>
<div class="t" style="left:1735.0px;top:221.1px;font-size:23.5px;color:#333;transform:scaleX(1.011);transform-origin:0 0">Bodies/Components</div>
<div class="t" style="left:1735.0px;top:280.8px;font-size:23.5px;color:#333;transform:scaleX(0.872);transform-origin:0 0">Faces</div>
<svg style="left:2084px;top:216px" width="32" height="92">
 <linearGradient id="rad" x1="0" y1="0" x2="0" y2="1"><stop offset="0" stop-color="#fdfdfd"/><stop offset="1" stop-color="#b9b9b9"/></linearGradient>
 <circle cx="16" cy="16" r="13.5" fill="url(#rad)" stroke="#3a3a3a" stroke-width="2"/>
 <circle cx="16" cy="16" r="7" fill="#000"/>
 <circle cx="16" cy="76" r="13.5" fill="url(#rad)" stroke="#3a3a3a" stroke-width="2"/>
</svg>
<div class="a" style="left:1712px;top:331px;width:802px;height:6px;background:#c3c3c3"></div>
<!-- in this design -->
<svg style="left:1728px;top:366px" width="18" height="12"><use href="#dtri" width="18" height="12"/></svg>
<div class="t" style="left:1758.0px;top:361.1px;font-size:23.5px;color:#333;font-weight:bold;transform:scaleX(1.014);transform-origin:0 0">In This Design</div>
<div class="a" style="left:1728px;top:406px;width:756px;height:223px;background:#f8f8f8"></div>
<div class="a" style="left:1736px;top:414px;width:312px;height:104px;background:#fff"></div>
<svg style="left:1744px;top:422px" width="88" height="87">
 <defs><linearGradient id="mbg" x1="0" y1="0" x2="0" y2="1"><stop offset="0" stop-color="#7c7c7c"/><stop offset="0.75" stop-color="#808080"/><stop offset="1" stop-color="#5e5e5e"/></linearGradient>
 <radialGradient id="ring" cx="0.5" cy="0.5" r="0.5"><stop offset="0.4" stop-color="#222"/><stop offset="0.7" stop-color="#9a9a9a"/><stop offset="0.85" stop-color="#444"/><stop offset="1" stop-color="#777"/></radialGradient></defs>
 <rect width="88" height="87" fill="url(#mbg)"/>
 <ellipse cx="45" cy="48" rx="33" ry="37" fill="#9c9c9c" stroke="#262626" stroke-width="4"/><ellipse cx="46" cy="47" rx="23" ry="28" fill="none" stroke="#3a3a3a" stroke-width="5"/><ellipse cx="45" cy="48" rx="28" ry="32.5" fill="none" stroke="#d8d8d8" stroke-width="2"/>
 <ellipse cx="48" cy="47" rx="15" ry="20" fill="#808080"/>
 <path d="M26 20c10-6 24-6 32 0" fill="none" stroke="#f4f4f4" stroke-width="6" stroke-linecap="round"/>
 <path d="M30 74c8 5 18 5 24 2" fill="none" stroke="#eee" stroke-width="6" stroke-linecap="round"/>
 <path d="M66 30c6 8 7 20 4 30" fill="none" stroke="#ccc" stroke-width="3"/>
 <path d="M22 62c-6-12-4-26 2-34" fill="none" stroke="#bbb" stroke-width="2"/>
</svg>
<svg style="left:1848px;top:422px" width="88" height="87" viewBox="0 0 96 96" preserveAspectRatio="none"><use href="#cube" style="--bg:#7c7a76;--top:#ede4d0;--front:#cfc2a3;--left:#e0d4b8"/></svg>
<svg style="left:1952px;top:422px" width="88" height="87" viewBox="0 0 96 96" preserveAspectRatio="none"><use href="#cube" style="--bg:#7c7a76;--top:#ece3ce;--front:#d3c7a9;--left:#e2d7bc"/></svg>
<div class="a" style="left:1712px;top:643px;width:802px;height:6px;background:#c3c3c3"></div>
<!-- library -->
<svg style="left:1728px;top:678px" width="18" height="12"><use href="#dtri" width="18" height="12"/></svg>
<div class="t" style="left:1758.0px;top:672.7px;font-size:23.5px;color:#333;font-weight:bold">Library</div>
<div class="a" style="left:1728px;top:718px;width:755px;height:43px;border:1.5px solid #4a4a4a;border-radius:2px;background:#f2f2f2"></div>
<div class="t" style="left:1736.5px;top:729.4px;font-size:26.0px;color:#6a6a6a">Search</div>
<svg style="left:2448px;top:727px" width="28" height="26"><circle cx="10" cy="10" r="8" fill="#fff" stroke="#222" stroke-width="2"/><path d="M16 16l8 8" stroke="#222" stroke-width="4" stroke-linecap="round"/></svg>
<div class="a" style="left:1728px;top:778px;width:756px;height:60px;background:#dcdcdc"></div>
<svg style="left:1737px;top:787px" width="48" height="48"><g fill="none" stroke="#555" stroke-width="5.5"><path d="M5 20a19 19 0 0 1 34-7"/><path d="M43 28a19 19 0 0 1-34 7"/></g><path d="M42 3v16h-16z M6 45v-16h16z" fill="#555"/></svg>
<div class="a" style="left:1792px;top:786px;width:284px;height:52px;background:#e0e0e0;border:1.5px solid #c8c8c8;border-bottom:none"></div>
<div class="t" style="left:1805.0px;top:801.1px;font-size:23.5px;color:#333">Fusion 360 Appearances</div>
<svg style="left:2089px;top:800px" width="36" height="26"><linearGradient id="cld" x1="0" y1="0" x2="0" y2="1"><stop offset="0" stop-color="#e8f2fb"/><stop offset="1" stop-color="#9cc0e0"/></linearGradient><path d="M6 22a5 5 0 0 1 1-9 8 8 0 0 1 10-6 9 9 0 0 1 15 7 4 4 0 0 1 0 8z" fill="url(#cld)" stroke="#3d6a96" stroke-width="1.8"/></svg>
<div class="t" style="left:2134.4px;top:801.1px;font-size:23.5px;color:#333;transform:scaleX(0.985);transform-origin:0 0">My Appearances</div>
<div class="t" style="left:2332.0px;top:801.1px;font-size:23.5px;color:#333;transform:scaleX(0.973);transform-origin:0 0">Favorites</div>
<div class="a" style="left:2078px;top:835px;width:240px;height:2px;background:#c4c4c4"></div>
<div class="a" style="left:2320px;top:835px;width:118px;height:2px;background:#c4c4c4"></div>
<div class="a" style="left:2440px;top:835px;width:43px;height:2px;background:#c4c4c4"></div>
<div class="t" style="left:1738.0px;top:869.4px;font-size:23.5px;color:#333">Show downloadable materials</div>
<svg style="left:2092px;top:865px" width="28" height="28"><linearGradient id="chk" x1="0" y1="0" x2="0" y2="1"><stop offset="0" stop-color="#fafafa"/><stop offset="1" stop-color="#c8c8c8"/></linearGradient><rect x="1.5" y="1.5" width="25" height="25" rx="4" fill="url(#chk)" stroke="#333" stroke-width="1.8"/><path d="M6 14l5 7 10-15" fill="none" stroke="#111" stroke-width="2.4"/></svg>
<div class="t" style="left:2254.4px;top:869.4px;font-size:23.5px;color:#aaaaaa;transform:scaleX(0.972);transform-origin:0 0">Cancel all Downloa...</div>
<!-- library list -->
<svg style="left:1728px;top:926px" width="30" height="26"><use href="#lfold" width="30" height="26"/></svg>
<div class="t" style="left:1771.0px;top:928.1px;font-size:23.5px;color:#333;transform:scaleX(0.947);transform-origin:0 0">Paint</div>
<svg style="left:1728px;top:976px" width="30" height="26"><use href="#lfold" width="30" height="26"/></svg>
<div class="t" style="left:1771.0px;top:978.1px;font-size:23.5px;color:#333;transform:scaleX(0.939);transform-origin:0 0">Plastic</div>
<svg style="left:1728px;top:1026px" width="30" height="26"><use href="#lfold" width="30" height="26"/></svg>
<div class="t" style="left:1771.0px;top:1028.1px;font-size:23.5px;color:#333">Stone</div>
<svg style="left:1728px;top:1076px" width="30" height="26"><use href="#lfold" width="30" height="26"/></svg>
<div class="t" style="left:1771.0px;top:1078.1px;font-size:23.5px;color:#333">Wood</div>
<div class="a" style="left:1758px;top:1118px;width:710px;height:96px;background:#f8f8f8"></div>
<svg style="left:1758px;top:1118px" width="96" height="96"><use href="#cube" style="--bg:#7a7772;--top:#e9dfc3;--front:#d5c9a7;--left:#ddd3b5"/></svg>
<div class="t" style="left:1864.6px;top:1155.6px;font-size:23.5px;color:#333">Bamboo Light &#8211; Semigloss</div>
<div class="a" style="left:1758px;top:1224px;width:710px;height:95px;background:#f8f8f8"></div>
<svg style="left:1758px;top:1224px" width="96" height="96"><use href="#cube" style="--bg:#7a7470;--top:#eaa674;--front:#cf7f4c;--left:#dd9564"/></svg>
<div class="t" style="left:1864.6px;top:1262.1px;font-size:23.5px;color:#333;transform:scaleX(0.984);transform-origin:0 0">Cherry</div>
<div class="a" style="left:1758px;top:1319px;width:710px;height:60px;background:#efefef"></div>
<svg style="left:1758px;top:1338px" width="30" height="26"><use href="#lfold" width="30" height="26"/></svg>
<div class="t" style="left:1800.7px;top:1339.7px;font-size:23.5px;color:#333;transform:scaleX(0.979);transform-origin:0 0">Finished</div>
<div class="a" style="left:1758px;top:1380px;width:710px;height:96px;background:#f8f8f8"></div>
<svg style="left:1758px;top:1380px" width="96" height="96"><use href="#cube" style="--bg:#7a7470;--top:#dc9a78;--front:#b86c4a;--left:#c98462"/></svg>
<div class="t" style="left:1864.6px;top:1418.4px;font-size:23.5px;color:#333;transform:scaleX(0.986);transform-origin:0 0">Mahogany</div>
<!-- scrollbar -->
<div class="a" style="left:2468px;top:922px;width:16px;height:559px;background:#c6c6c9"></div>
<div class="a" style="left:2468px;top:1076px;width:16px;height:209px;background:#9b9b9b;border:1px solid #777;border-radius:8px"></div>
<!-- footer -->
<div class="a" style="left:1709px;top:1488px;width:805px;height:2px;background:#c9c9c9"></div>
<div class="a" style="left:1709px;top:1490px;width:805px;height:69px;background:linear-gradient(#f3f3f3,#ececec)"></div>
<svg style="left:1725px;top:1513px" width="26" height="26"><circle cx="13" cy="13" r="12.5" fill="#111"/><path d="M10 11h4v8h2v2h-6v-2h1.5v-6h-1.5z" fill="#fff"/><rect x="11.5" y="5.5" width="3" height="3" fill="#fff"/></svg>
<div class="a" style="left:2416px;top:1506px;width:110px;height:38px;background:#ececec;border:2px solid #b0b0b0"></div>
<div class="t" style="left:2443.7px;top:1513.5px;font-size:25.0px;color:#555">Close</div>
<div class="a" style="left:2510px;top:1563px;width:1.5px;height:18px;background:#c8c8c8"></div>

<!-- window corners -->
<svg style="left:0;top:0" width="22" height="22"><path d="M0 0h22a22 22 0 0 0-22 22z" fill="#55657a"/></svg>
<svg style="left:2492px;top:0" width="22" height="22"><path d="M22 0h-22a22 22 0 0 1 22 22z" fill="#6d8294"/></svg>
<!-- cursor -->
<svg style="left:2200px;top:636px" width="40" height="50">
 <filter id="csh" x="-30%" y="-30%" width="160%" height="160%"><feGaussianBlur stdDeviation="1.2"/></filter>
 <path d="M8 5V38.5L14.5 33 19.3 42.9 24.8 40 20.9 31 29.6 30.2z" fill="#000" opacity="0.35" filter="url(#csh)" transform="translate(1 2)"/>
 <path d="M7.4 4.3V37.5L14.5 32 19.3 41.9 24.8 39 20.9 30 29.6 29.2z" fill="#fff"/>
 <path d="M10.2 12V33.2L14.5 28.8 19.5 39 22.8 37.5 19.3 28 25.2 27.6z" fill="#000"/>
</svg>
</body></html>
